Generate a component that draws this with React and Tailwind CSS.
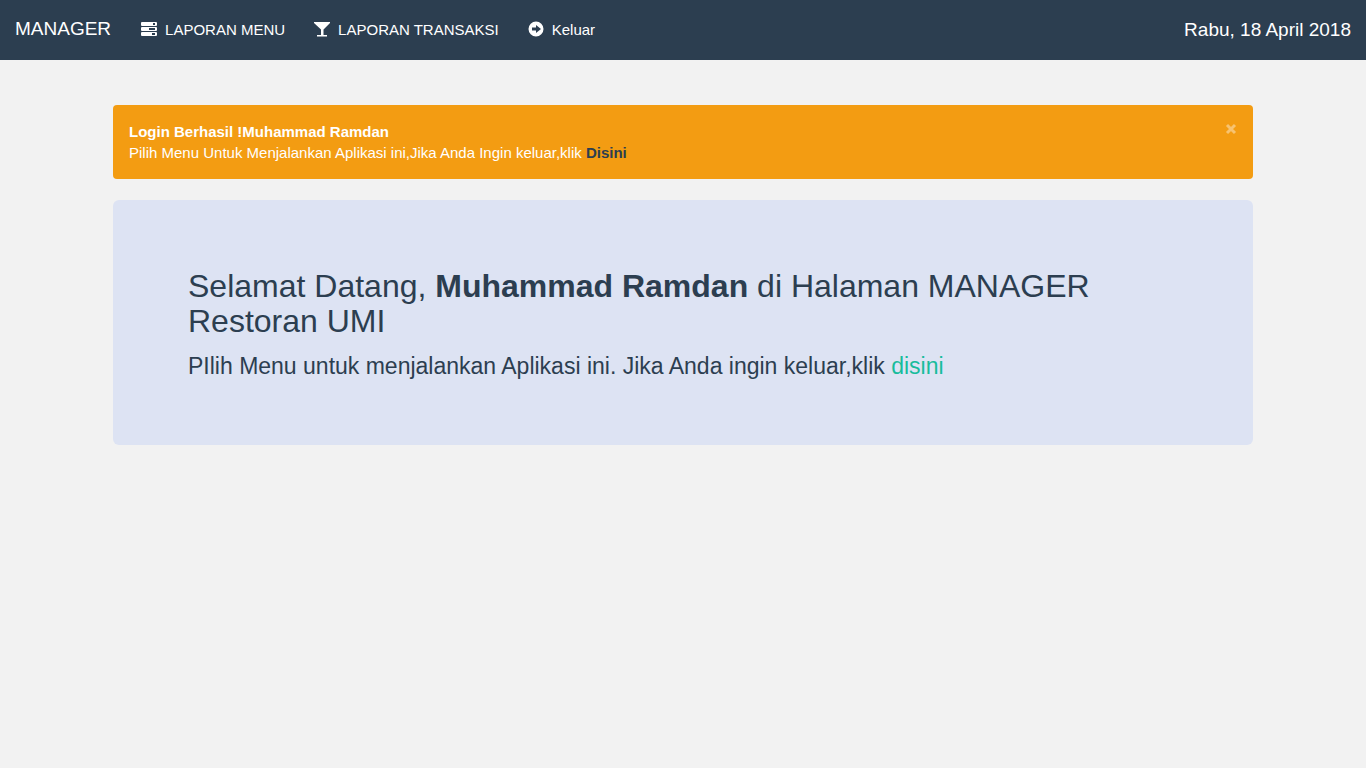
const navIcons = {
  tasks: (
    <path
      fillRule="evenodd"
      d="M1 1h14a1 1 0 0 1 1 1v2a1 1 0 0 1-1 1H1a1 1 0 0 1-1-1V2a1 1 0 0 1 1-1Zm11 1v2h2V2ZM1 6h14a1 1 0 0 1 1 1v2a1 1 0 0 1-1 1H1a1 1 0 0 1-1-1V7a1 1 0 0 1 1-1Zm7 1v2h6V7ZM1 11h14a1 1 0 0 1 1 1v2a1 1 0 0 1-1 1H1a1 1 0 0 1-1-1v-2a1 1 0 0 1 1-1Zm10 1v2h3v-2Z"
    />
  ),
  glass: <path d="M0 1h16v1L9.500 8.500V14H13v1.500H3V14h4V8.500L0 2Z" />,
  arrow: (
    <path
      fillRule="evenodd"
      d="M8 .5a7.500 7.500 0 1 1 0 15 7.500 7.500 0 0 1 0-15ZM8 4v2.500H4v3h4V12l5-4Z"
    />
  ),
};

const navItems = [
  { label: "LAPORAN MENU", icon: "tasks" },
  { label: "LAPORAN TRANSAKSI", icon: "glass" },
  { label: "Keluar", icon: "arrow" },
];

function Navbar() {
  return (
    <nav className="flex min-h-[60px] flex-wrap items-center bg-[#2c3e50] text-white">
      <a href="#" className="px-[15px] pb-0.5 text-[19px] leading-5">
        MANAGER
      </a>
      <ul className="flex flex-wrap">
        {navItems.map((item) => (
          <li key={item.label}>
            <a href="#" className="flex items-center gap-2 pr-[14px] pl-[15px] py-5 text-[15px] leading-5">
              <svg viewBox="0 0 16 16" className="mb-0.5 size-4 fill-current" aria-hidden="true">
                {navIcons[item.icon]}
              </svg>
              {item.label}
            </a>
          </li>
        ))}
      </ul>
      <p className="ml-auto px-[15px] text-[19px] leading-5">Rabu, 18 April 2018</p>
    </nav>
  );
}

function Alert() {
  return (
    <div role="alert" className="flex items-start justify-between rounded bg-[#f39c12] p-4 text-[15px] leading-[21px] text-white">
      <p>
        <strong>Login Berhasil !Muhammad Ramdan</strong>
        <br />
        Pilih Menu Untuk Menjalankan Aplikasi ini,Jika Anda Ingin keluar,klik{" "}
        <a href="#" className="font-bold text-[#2c3e50]">
          Disini
        </a>
      </p>
      <button type="button" aria-label="Tutup" className="flex h-4 w-3 shrink-0 items-center justify-center opacity-40">
        <svg viewBox="0 0 12 12" className="size-3 shrink-0" aria-hidden="true">
          <path d="M2 2l8 8M10 2l-8 8" stroke="currentColor" strokeWidth="3" />
        </svg>
      </button>
    </div>
  );
}

export default function App() {
  return (
    <div className="min-h-screen bg-[#f2f2f2] font-['Liberation_Sans',Arial,sans-serif] text-[#2c3e50]">
      <Navbar />
      <main className="mx-auto flex max-w-[1140px] flex-col gap-[21px] pt-[45px]">
        <Alert />
        <section className="rounded-md bg-[#dde3f3] px-[75px] pt-[69px] pb-[62px]">
          <h2 className="text-[32px] leading-[35px]">
            Selamat Datang, <strong>Muhammad Ramdan</strong> di Halaman MANAGER Restoran UMI
          </h2>
          <p className="mt-[11px] text-[23px] leading-[33px]">
            PIlih Menu untuk menjalankan Aplikasi ini. Jika Anda ingin keluar,klik{" "}
            <a href="#" className="text-[#18bc9c]">
              disini
            </a>
          </p>
        </section>
      </main>
    </div>
  );
}
